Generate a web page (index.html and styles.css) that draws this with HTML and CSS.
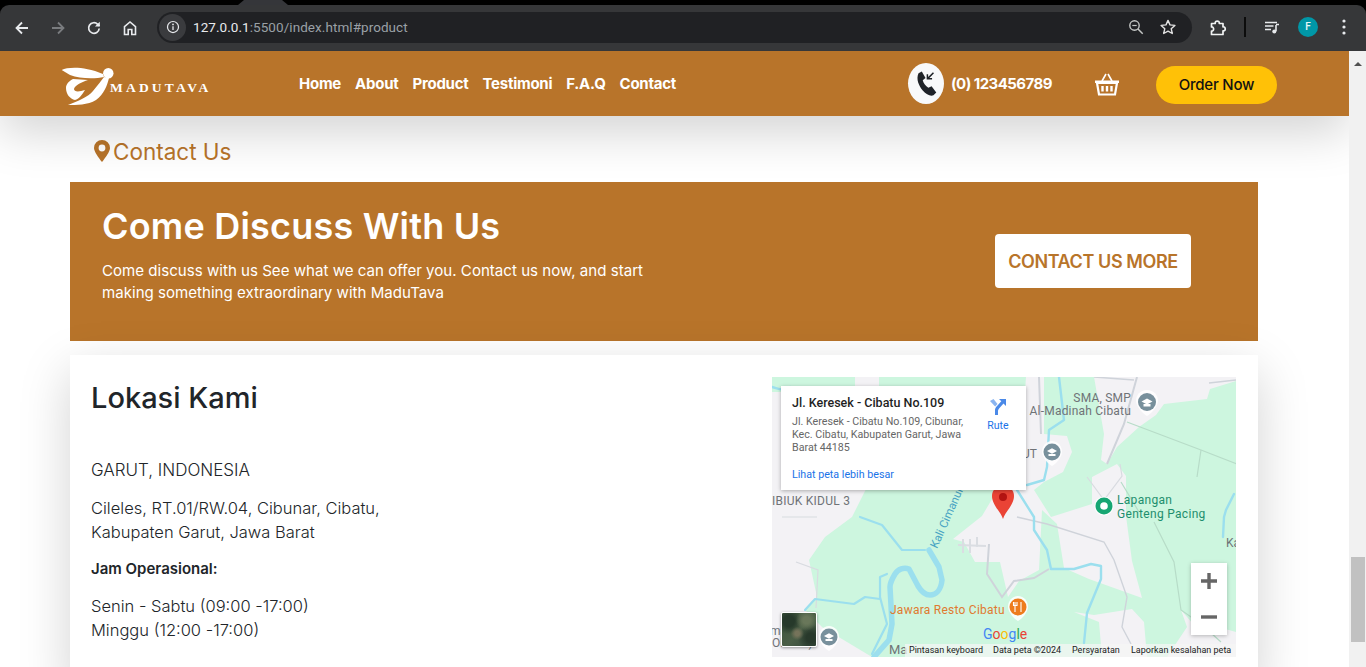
FILE: index.html
```html
<!DOCTYPE html>
<html lang="id">
<head>
<meta charset="utf-8">
<title>MaduTava</title>
<link rel="stylesheet" href="styles.css">
</head>
<body>
<div class="browser">
  <div class="tabstrip"><span class="tab-bump"></span></div>
  <div class="toolbar">
    <div class="nav-icons">
      <svg class="ticon" viewBox="0 0 20 20"><path d="M16 10H5M10 4.500 4.500 10l5.500 5.500" fill="none" stroke="#e8eaed" stroke-width="1.800"/></svg>
      <svg class="ticon" viewBox="0 0 20 20"><path d="M4 10h11M10 4.500l5.500 5.500-5.500 5.500" fill="none" stroke="#7a7c7f" stroke-width="1.800"/></svg>
      <svg class="ticon" viewBox="0 0 20 20"><path d="M15.200 10.500a5.300 5.300 0 1 1-1.500-4.200L15.500 8" fill="none" stroke="#e8eaed" stroke-width="1.700"/><path d="M15.800 3.700v4.900h-4.900z" fill="#e8eaed"/></svg>
      <svg class="ticon" viewBox="0 0 20 20"><path d="M4.500 16.500V8.600L10 4l5.500 4.600v7.900h-3.700v-5H8.200v5z" fill="none" stroke="#e8eaed" stroke-width="1.600"/></svg>
    </div>
    <div class="omnibox">
      <span class="site-info"><svg viewBox="0 0 16 16" width="14" height="14"><circle cx="8" cy="8" r="6.300" fill="none" stroke="#e8eaed" stroke-width="1.400"/><path d="M8 7.200v4.300" stroke="#e8eaed" stroke-width="1.500"/><circle cx="8" cy="5" r="1" fill="#e8eaed"/></svg></span>
      <span class="url"><span class="url-host">127.0.0.1</span>:5500/index.html#product</span>
      <span class="omni-right">
        <svg viewBox="0 0 18 18" width="18" height="18"><circle cx="7.500" cy="7.500" r="4.700" fill="none" stroke="#c4c7c5" stroke-width="1.400"/><path d="M11 11l4.700 4.700" stroke="#c4c7c5" stroke-width="1.500"/><path d="M5.300 7.500h4.400" stroke="#c4c7c5" stroke-width="1.200"/></svg>
        <svg viewBox="0 0 18 18" width="18" height="18"><path d="M9 2.400l2 4.500 4.900.5-3.700 3.300 1.100 4.800L9 13.100l-4.300 2.400 1.100-4.800L2.100 7.400 7 6.900z" fill="none" stroke="#e3e3e3" stroke-width="1.400" stroke-linejoin="round"/></svg>
      </span>
    </div>
    <div class="tool-right">
      <svg class="ext" viewBox="0 0 20 20" width="20" height="20"><path d="M3.500 6.500h3.700c-.6-3.300 4.700-3.300 4.100 0h3.700v3.300c3-.5 3 4.700 0 4.100v3.600H3.500v-3.500c2.800.400 2.800-4.500 0-4z" fill="none" stroke="#f1f3f4" stroke-width="1.700" stroke-linejoin="round"/></svg>
      <span class="sep"></span>
      <svg class="media" viewBox="0 0 18 18" width="18" height="18"><path d="M2 4.500h12M2 8h8.500M2 11.500h6" stroke="#e8eaed" stroke-width="1.500"/><path d="M13 7v6.300" stroke="#e8eaed" stroke-width="1.600"/><path d="M13 6.500h3" stroke="#e8eaed" stroke-width="1.500"/><circle cx="11.300" cy="13.500" r="2" fill="#e8eaed"/></svg>
      <span class="avatar">F</span>
      <svg class="dots" viewBox="0 0 4 18" width="4" height="18"><circle cx="2" cy="3" r="1.600" fill="#e8eaed"/><circle cx="2" cy="9" r="1.600" fill="#e8eaed"/><circle cx="2" cy="15" r="1.600" fill="#e8eaed"/></svg>
    </div>
  </div>

  <div class="viewport">
    <div class="page">
      <header class="site-header">
        <a class="logo">
          <svg class="logo-mark" viewBox="0 0 56 42" width="56" height="42">
            <path fill="#fff" d="M1.700 6C8 3 24 2 43 10l1 3C35 15 20 15 10 11z"/>
            <circle cx="48.300" cy="9.300" r="5.200" fill="#fff"/>
            <path fill="#fff" d="M44 13l5 1c-2 8-5 16-13 22-8 5-20 5-28 5 10-4 20-8 25-14 5-6 8-10 11-14z"/>
            <path fill="#fff" d="M13 15l15 1c-6 2-13 5-14 9 0 3 5 3 11 1-3 5-6 9-10 10-5-1-9-6-9-12 0-4 3-7 7-9z"/>
          </svg>
          <span class="logo-text">MADUTAVA</span>
        </a>
        <nav class="main-nav">
          <a>Home</a><a>About</a><a>Product</a><a>Testimoni</a><a>F.A.Q</a><a>Contact</a>
        </nav>
        <div class="header-right">
          <span class="phone-badge">
            <svg viewBox="0 0 30 34" width="28" height="32"><path fill="#1f2328" d="M7 5.500l3.500-2 4 7-3 2.500c.8 3 3.200 6.400 6 8l3.500-1.500 5 6.500-3 3c-3 1.500-7.500-.5-11.500-5C7.500 19 4 12 7 5.500z"/><path d="M23 5 16.500 11.500M16.500 6.500v5h5" fill="none" stroke="#1f2328" stroke-width="1.600"/></svg>
          </span>
          <span class="phone-number">(0) 123456789</span>
          <svg class="basket" viewBox="0 0 26 26" width="26" height="26"><path d="M8 10l4-7M18 10l-4-7" stroke="#fff" stroke-width="1.600" fill="none"/><path d="M1 9.500h24v2.500H1z" fill="#fff"/><path d="M3 12l2 11.500h16L23 12z" fill="none" stroke="#fff" stroke-width="2.200"/><path d="M8.500 15v5.500M13 15v5.500M17.500 15v5.500" stroke="#fff" stroke-width="2.400"/></svg>
          <a class="order-btn">Order Now</a>
        </div>
      </header>

      <main class="content">
        <h3 class="section-title">
          <svg viewBox="0 0 16 22" width="16" height="22"><path fill="#b8742a" fill-rule="evenodd" d="M8 0a8 8 0 0 1 8 8c0 3.500-4.700 10-8 14C4.700 18 0 11.500 0 8a8 8 0 0 1 8-8zm0 4.600a3.400 3.400 0 1 0 0 6.800 3.400 3.400 0 0 0 0-6.800z"/></svg>
          <span class="section-label">Contact Us</span>
        </h3>

        <section class="banner">
          <div class="banner-copy">
            <h2>Come Discuss With Us</h2>
            <p>Come discuss with us See what we can offer you. Contact us now, and start making something extraordinary with MaduTava</p>
          </div>
          <a class="banner-btn">CONTACT US MORE</a>
        </section>

        <section class="location-card">
          <div class="location-text">
            <h2>Lokasi Kami</h2>
            <p class="loc-city">GARUT, INDONESIA</p>
            <p class="loc-address">Cileles, RT.01/RW.04, Cibunar, Cibatu,<br>Kabupaten Garut, Jawa Barat</p>
            <p class="loc-hours-title">Jam Operasional:</p>
            <p class="loc-hours">Senin - Sabtu (09:00 -17:00)<br>Minggu (12:00 -17:00)</p>
          </div>
          <div class="map">
            <svg class="map-canvas" viewBox="0 0 464 280" width="464" height="280">
              <rect width="464" height="280" fill="#cdf6df"/>
              <g fill="#f3f2f5">
                <path d="M83 0h24v12H83zM0 15h12v98H0z"/>
                <path d="M0 100h100L80 140 53 160 37 183l8 37-12 13 17 17 50 30H0z"/>
                <path d="M254 0h18v57l23 2 5 16-9 20-19 10-10 8 17 27 41-13v-27l25-13 9 12v40l6 45 10 37-53-19-25-11-7-44-15-14-3 60-20 11-11 16-8-35-25 0-11-20-11-3 29-23 16-27h20z"/>
                <path d="M322 0h142v4l-26 8-3 10-43 5-8 11-17 12-22 20-10 17-6-4 3-26z"/>
                <path d="M302 235l20 3 38-6 12 13 3 35h-45l-3-35z"/>
                <path d="M409 233l6 17-20 30h69v-25l-18-5-24-2z"/>
              </g>
              <g fill="none" stroke="#cfd3da" stroke-width="2">
                <path d="M365 0l-13 47-17 40M267 0l2 57"/>
                <path d="M437 6l27-3M322 0l40 3" stroke-width="1.500"/>
                <path d="M217 167l-2 30 15 23 12-16 20-3 15-9"/>
                <path d="M245 140l30 7 57 18 10 18 13 37-5 30 9 17" stroke-width="1.400"/>
                <path d="M186 168l28 1M191 162v14M198 162v14M205 160v10" stroke="#dadde2" stroke-width="2"/>
                <path d="M10 140l35 0M24 185l22 8-2 38M315 100l17 23 18-24-2-12" stroke-width="1.200" stroke="#d8dbe0"/>
              </g>
              <g fill="none" stroke="#b7dcc8" stroke-width="1.200">
                <path d="M355 45l74 28 36 14M382 145l20 40 7 48 20 14 20 18"/>
                <path d="M429 73l-4 27M349 105l18 30"/>
              </g>
              <g fill="none" stroke="#9bdfee" stroke-linejoin="round" stroke-linecap="round">
                <path stroke-width="5.500" d="M157 173l10 17 3 13c-1 10-6 15-12 15-5 0-9-4-12-9l-9-17c-5-2-11 0-14 5-3 5-5 9-5 13l2 37-3 16-15 17"/>
                <path stroke-width="2.200" d="M88 140l22 8 20 25 23 0M115 197l-7 3v20l7 27-15 30M33 233l10-11 39 5 11-7 15 2"/>
                <path stroke-width="2.400" d="M245 113l17 27v13l13 20 4 19h23l17-5 10 2v13l-14 34-3 30"/>
                <path stroke-width="2.400" d="M287 0l5 43-15 10-2 37-3 13-17 5M462 117l-8 16-2 7-1 20M0 10c8 2 10 4 18 0"/>
              </g>
              <g font-family="Roboto, sans-serif" font-size="12" fill="#6f7377">
                <text x="359" y="25" text-anchor="end" letter-spacing=".2">SMA, SMP</text>
                <text x="359" y="38" text-anchor="end" letter-spacing=".2">Al-Madinah Cibatu</text>
                <text x="265" y="81" text-anchor="end">UT</text>
                <text x="0" y="128" letter-spacing=".25">IBIUK KIDUL 3</text>
                <text x="454" y="170">Ka</text>
                <text x="117" y="277" font-size="13">Ma</text>
                <text x="-2" y="258">ma</text>
                <text x="0" y="270">ONI 25)</text>
              </g>
              <text x="0" y="0" transform="translate(165 172) rotate(-66)" font-family="Roboto, sans-serif" font-size="11.500" fill="#47a3c3">Kali Cimanuk</text>
              <text font-family="Roboto, sans-serif" font-size="12" fill="#1e8e6e" letter-spacing=".3"><tspan x="345" y="127">Lapangan</tspan><tspan x="345" y="141">Genteng Pacing</tspan></text>
              <text x="118" y="237" font-family="Roboto, sans-serif" font-size="12" fill="#e07a30" letter-spacing=".25">Jawara Resto Cibatu</text>
              <g>
                <path d="M375 13c-7 0-11 5-11 11 0 5 7 13 11 15 4-2 11-10 11-15 0-6-4-11-11-11z" fill="#fff" opacity=".85"/>
                <circle cx="375" cy="25" r="9" fill="#78909c"/><path d="M369.500 24.500l5.500-3 5.500 3-5.500 3z" fill="#fff"/><path d="M371.500 27v2.500h7V27" fill="#fff"/>
                <path d="M280 64c-6 0-10 5-10 11 0 5 6 12 10 14 4-2 10-9 10-14 0-6-4-11-10-11z" fill="#fff" opacity=".85"/>
                <circle cx="280" cy="75" r="8.500" fill="#78909c"/><path d="M275 74l5-2.700 5 2.700-5 2.700z" fill="#fff"/><path d="M276.500 77v2h7v-2" fill="#fff"/>
                <path d="M57 249c-6 0-10 5-10 11 0 5 6 12 10 14 4-2 10-9 10-14 0-6-4-11-10-11z" fill="#fff" opacity=".85"/>
                <circle cx="57" cy="260" r="8.500" fill="#78909c"/><path d="M52 259l5-2.700 5 2.700-5 2.700z" fill="#fff"/><path d="M53.500 262v2h7v-2" fill="#fff"/>
                <circle cx="332" cy="129" r="9.500" fill="#fff"/><circle cx="332" cy="129" r="8.500" fill="#17a673"/><circle cx="332" cy="129" r="3.800" fill="#fff"/>
                <path d="M246 219c-6 0-10 5-10 11 0 5 6 12 10 14 4-2 10-9 10-14 0-6-4-11-10-11z" fill="#fff" opacity=".85"/>
                <circle cx="246" cy="230" r="8.500" fill="#ee7c1d"/><path d="M243 225v10M249 225v10M241.500 225v3.500h3.500V225" stroke="#fff" stroke-width="1.100" fill="none"/>
              </g>
              <path d="M231 142c-2-7-11-14-11-23a11 11 0 0 1 22 0c0 9-9 16-11 23z" fill="#ea4335"/>
              <circle cx="231" cy="120" r="4" fill="#b31412"/>
              <text x="211" y="262" font-family="Roboto, sans-serif" font-size="14"><tspan fill="#4285f4">G</tspan><tspan fill="#ea4335">o</tspan><tspan fill="#fbbc05">o</tspan><tspan fill="#4285f4">g</tspan><tspan fill="#34a853">l</tspan><tspan fill="#ea4335">e</tspan></text>
            </svg>

            <div class="info-window">
              <div class="info-main">
                <div class="info-title">Jl. Keresek - Cibatu No.109</div>
                <div class="info-address">Jl. Keresek - Cibatu No.109, Cibunar, Kec. Cibatu, Kabupaten Garut, Jawa Barat 44185</div>
                <a class="info-link">Lihat peta lebih besar</a>
              </div>
              <div class="info-route">
                <svg viewBox="0 0 20 20" width="20" height="20"><path fill="#4a89e8" d="M11 2h7v7l-2.500-2.500-4 4.500c-.8 1-1.500 2-1.500 3v4H7v-5c0-1.500.8-2.700 1.800-3.800l4.500-5z"/><path fill="#8ab4f0" d="M2 4l3.500-2 4 5-2.300 2.600z"/></svg>
                <span>Rute</span>
              </div>
            </div>

            <div class="map-thumb"></div>

            <div class="zoom-ctrl">
              <svg viewBox="0 0 36 36" width="36" height="36"><path d="M10 18h16M18 10v16" stroke="#666" stroke-width="3.400"/></svg>
              <svg viewBox="0 0 36 36" width="36" height="36"><path d="M10 18h16" stroke="#666" stroke-width="3.400"/></svg>
            </div>

            <div class="map-attrib">
              <span>Pintasan keyboard</span>
              <span>Data peta ©2024</span>
              <span>Persyaratan</span>
              <span>Laporkan kesalahan peta</span>
            </div>
          </div>
        </section>
      </main>
    </div>
    <div class="scrollbar">
      <span class="sb-arrow"></span>
      <span class="sb-thumb"></span>
    </div>
  </div>
</div>
</body>
</html>
```

FILE: styles.css
```css
* { box-sizing: border-box; }
html, body { margin: 0; height: 100%; overflow: hidden; background: #fff; }
body { font-family: Inter, "Noto Sans", sans-serif; color: #212529; }
a { text-decoration: none; color: inherit; }
p, h2, h3 { margin: 0; }

.browser { height: 667px; display: flex; flex-direction: column; overflow: hidden; background: #000; }

.tabstrip { height: 5px; background: #000; flex: none; padding-left: 238px; }
.tab-bump { display: block; width: 50px; height: 5px; background: #35363a; clip-path: polygon(6px 0, 44px 0, 50px 100%, 0 100%); }

.toolbar { height: 46px; flex: none; display: flex; align-items: center; background: #363739; border-radius: 9px 9px 0 0; }
.nav-icons { display: flex; align-items: center; gap: 16px; padding-left: 12px; width: 157px; }
.ticon { width: 20px; height: 20px; flex: none; }

.omnibox { width: 1035px; height: 31px; margin-top: -2px; flex: none; display: flex; align-items: center; background: #202124; border-radius: 16px; padding: 0 15px 0 2px; }
.site-info { width: 27px; height: 27px; border-radius: 50%; background: #3a3b3e; display: flex; align-items: center; justify-content: center; flex: none; }
.url { margin-left: 7px; font: 400 13.500px Roboto, sans-serif; color: #9aa0a6; letter-spacing: .06px; }
.url-host { color: #e8eaed; }
.omni-right { margin-left: auto; display: flex; align-items: center; gap: 14px; }

.tool-right { display: flex; align-items: center; flex: 1; margin-top: -2px; }
.ext { margin-left: 16px; }
.sep { width: 2px; height: 20px; background: #0c0c0c; margin-left: 16px; }
.media { margin-left: 17px; }
.avatar { width: 20px; height: 20px; margin-left: 17px; border-radius: 50%; background: #0097a7; color: #e8f7f9; font: 500 10px/20px Roboto, sans-serif; text-align: center; }
.dots { margin-left: 24px; }

.viewport { flex: 1; min-height: 0; display: flex; background: #fff; }
.page { flex: 1; min-width: 0; overflow: hidden; background: #fff; position: relative; }

.site-header { height: 65px; background: #b8742a; display: flex; align-items: center; padding-left: 60px; position: relative; z-index: 2; box-shadow: 0 16px 48px rgba(0, 0, 0, .175); }
.logo { display: flex; align-items: flex-end; width: 239px; flex: none; height: 42px; margin-top: 2px; }
.logo-mark { flex: none; margin-right: -6px; }
.logo-text { font: 700 13.500px/1 "Liberation Serif", serif; color: #fff; letter-spacing: 3.200px; padding-bottom: 11px; }
.main-nav { display: flex; gap: 14px; }
.main-nav a { font: 700 15px/20px Inter, sans-serif; color: #fff; letter-spacing: -.25px; }
.header-right { margin-left: auto; display: flex; align-items: center; padding-right: 72px; }
.phone-badge { width: 36px; height: 41px; border-radius: 50%; background: #f8f9fa; display: flex; align-items: center; justify-content: center; }
.phone-number { font: 700 15px/20px Inter, sans-serif; color: #fff; margin-left: 7px; width: 143px; letter-spacing: -.55px; }
.basket { flex: none; }
.order-btn { width: 121px; height: 38px; margin-left: 36px; margin-top: 2px; border-radius: 19px; background: #ffc107; color: #111; font: 500 15px/38px Inter, sans-serif; text-align: center; letter-spacing: -.2px; }

.content { width: 1188px; margin-left: 70px; position: relative; }
.section-title { display: flex; align-items: center; gap: 3px; height: 66px; padding: 4px 0 0 24px; font: 400 22.500px/30px Inter, sans-serif; color: #b8742a; }
.section-label { padding-top: 2px; }

.banner { height: 159px; background: #b8742a; display: flex; justify-content: space-between; align-items: center; padding: 0 67px 0 32px; color: #fff; }
.banner-copy { align-self: flex-start; padding-top: 22px; width: 560px; }
.banner-copy h2 { font: 600 36px/44px Inter, sans-serif; letter-spacing: .2px; }
.banner-copy p { font: 400 15.100px/22px Inter, sans-serif; margin-top: 12px; }
.banner-btn { width: 196px; height: 54px; margin-bottom: 2px; background: #fff; border-radius: 4px; color: #b8742a; font: 600 18px/56px Inter, sans-serif; text-align: center; letter-spacing: -.4px; }

.location-card { margin-top: 14px; background: #fff; display: flex; justify-content: space-between; padding: 22px 22px 30px 21px; box-shadow: 0 16px 48px rgba(0, 0, 0, .175); }
.location-text h2 { font: 500 29px/42px Inter, sans-serif; }
.loc-city { font: 300 17px/24px Inter, sans-serif; margin-top: 39px; }
.loc-address { font: 300 16.500px/24px Inter, sans-serif; margin-top: 14px; }
.loc-hours-title { font: 600 15px/24px Inter, sans-serif; margin-top: 13px; }
.loc-hours { font: 300 16.500px/24px Inter, sans-serif; margin-top: 13px; }

.map { width: 464px; height: 280px; position: relative; flex: none; overflow: hidden; font-family: Roboto, sans-serif; }
.map-canvas { display: block; }
.info-window { position: absolute; left: 9px; top: 9px; width: 245px; height: 104px; background: #fff; box-shadow: 0 1px 4px rgba(0, 0, 0, .3); display: flex; }
.info-main { width: 195px; padding: 9px 0 0 11px; }
.info-title { font: 500 12.500px/15px Roboto, sans-serif; color: #1f1f1f; }
.info-address { font: 400 10.700px/13px Roboto, sans-serif; color: #666; margin-top: 5px; width: 180px; }
.info-link { display: block; font: 400 10.700px/13px Roboto, sans-serif; color: #1a73e8; margin-top: 14px; }
.info-route { width: 50px; display: flex; flex-direction: column; align-items: center; padding: 11px 6px 0 0; color: #1a73e8; font: 400 10.500px/13px Roboto, sans-serif; gap: 2px; }
.map-thumb { position: absolute; left: 9px; top: 235px; width: 36px; height: 35px; border: 1px solid #fff; border-radius: 2px; box-shadow: 0 1px 3px rgba(0, 0, 0, .4); background: radial-gradient(circle at 45% 62%, #75735a 0 8%, transparent 24%), radial-gradient(circle at 72% 22%, #69775a 0 10%, transparent 30%), radial-gradient(circle at 20% 25%, #26392a 0 15%, transparent 35%), radial-gradient(circle at 85% 75%, #28392b 0 12%, transparent 35%), linear-gradient(135deg, #3a5238, #4a5e46 55%, #34483a); }
.zoom-ctrl { position: absolute; left: 419px; top: 186px; width: 36px; height: 72px; background: #fff; box-shadow: 0 1px 4px rgba(0, 0, 0, .25); display: flex; flex-direction: column; }
.map-attrib { position: absolute; left: 133px; right: 0; bottom: 0; height: 13px; background: rgba(245, 245, 245, .72); display: flex; padding-left: 4px; font: 400 9px/12px Roboto, sans-serif; color: #222; white-space: nowrap; }
.map-attrib span:nth-child(1) { width: 84px; }
.map-attrib span:nth-child(2) { width: 79px; }
.map-attrib span:nth-child(3) { width: 59px; }

.scrollbar { width: 17px; flex: none; background: #f1f1f1; position: relative; }
.sb-arrow { position: absolute; left: 5px; top: 11px; width: 0; height: 0; border: 4px solid transparent; border-bottom: 4px solid #505050; border-top: 0; }
.sb-thumb { position: absolute; left: 2px; top: 506px; width: 14px; height: 85px; background: #c1c1c1; }
```
